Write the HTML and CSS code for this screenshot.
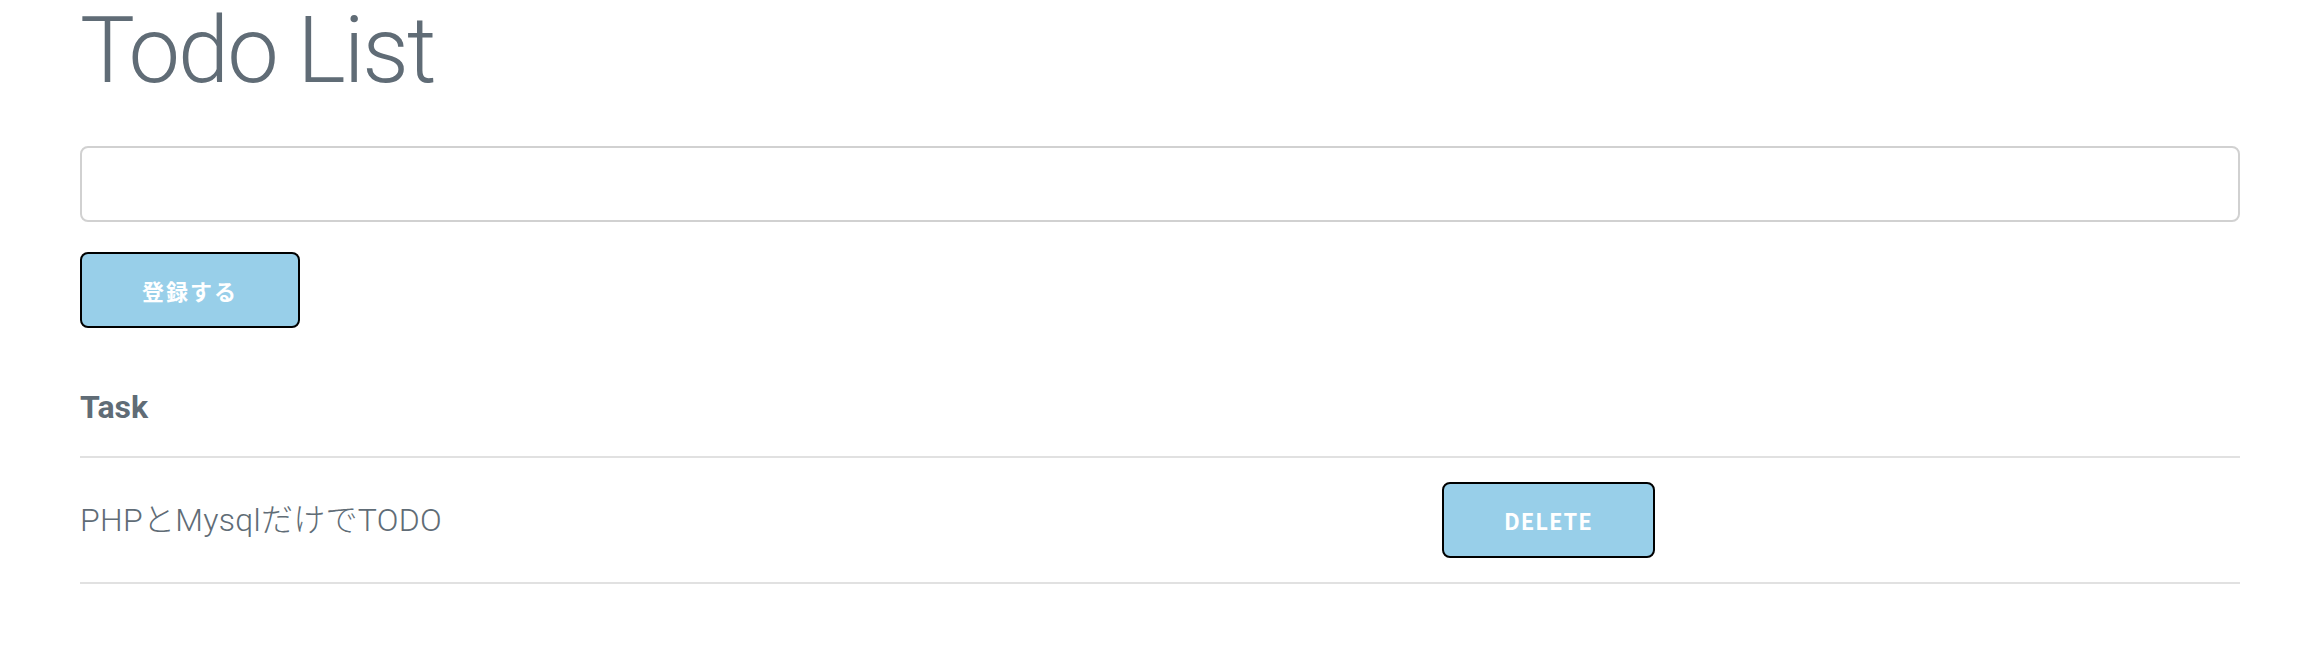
FILE: index.html
```html
<!DOCTYPE html>
<html lang="ja">
<head>
<meta charset="utf-8">
<title>Todo List</title>
<link rel="stylesheet" href="styles.css">
</head>
<body>
<div class="container">
  <h1 class="title">Todo List</h1>
  <form class="todo-form">
    <input class="text-input" type="text" name="task">
    <button class="btn" type="button">登録する</button>
  </form>
  <table class="task-table">
    <colgroup>
      <col class="col-task">
      <col class="col-action">
    </colgroup>
    <thead>
      <tr>
        <th>Task</th>
        <th></th>
      </tr>
    </thead>
    <tbody>
      <tr>
        <td>PHPとMysqlだけでTODO</td>
        <td><button class="btn btn-delete" type="button">Delete</button></td>
      </tr>
    </tbody>
  </table>
</div>
</body>
</html>
```
FILE: styles.css
```css
* {
  box-sizing: border-box;
}

html, body {
  margin: 0;
  padding: 0;
  background: #ffffff;
}

body {
  font-family: Roboto, "Noto Sans CJK JP", sans-serif;
  font-weight: 300;
  color: #606c76;
}

.container {
  width: 2160px;
  margin-left: 80px;
}

.title {
  margin: 0 0 45px 0;
  font-size: 92px;
  line-height: 101px;
  font-weight: 300;
  letter-spacing: -2px;
  color: #606c76;
}

.todo-form {
  display: flex;
  flex-direction: column;
  align-items: flex-start;
  margin: 0 0 30px 0;
}

.text-input {
  display: block;
  width: 100%;
  height: 76px;
  margin: 0 0 30px 0;
  padding: 12px 20px;
  border: 2px solid #d1d1d1;
  border-radius: 8px;
  background: #ffffff;
  font-family: Roboto, "Noto Sans CJK JP", sans-serif;
  font-size: 32px;
}

.btn {
  display: inline-block;
  height: 76px;
  margin: 0;
  padding: 0 60px;
  border: 2px solid #000000;
  border-radius: 8px;
  background: #98cfe9;
  color: #ffffff;
  font-family: "Noto Sans CJK JP", sans-serif;
  font-size: 22px;
  font-weight: 700;
  letter-spacing: 2px;
  text-transform: uppercase;
  line-height: 72px;
  white-space: nowrap;
}

.btn-delete {
  letter-spacing: 1px;
}

.task-table {
  width: 100%;
  border-collapse: collapse;
  border-spacing: 0;
  table-layout: fixed;
}

.col-task {
  width: 1332px;
}

.col-action {
  width: 828px;
}

.task-table th,
.task-table td {
  padding: 24px 30px;
  border-bottom: 2px solid #e1e1e1;
  text-align: left;
  vertical-align: middle;
}

.task-table th:first-child,
.task-table td:first-child {
  padding-left: 0;
}

.task-table th {
  font-size: 32px;
  line-height: 50px;
  font-weight: 700;
}

.task-table td {
  font-size: 32px;
  line-height: 50px;
  letter-spacing: 0.3px;
  font-weight: 300;
}
```
